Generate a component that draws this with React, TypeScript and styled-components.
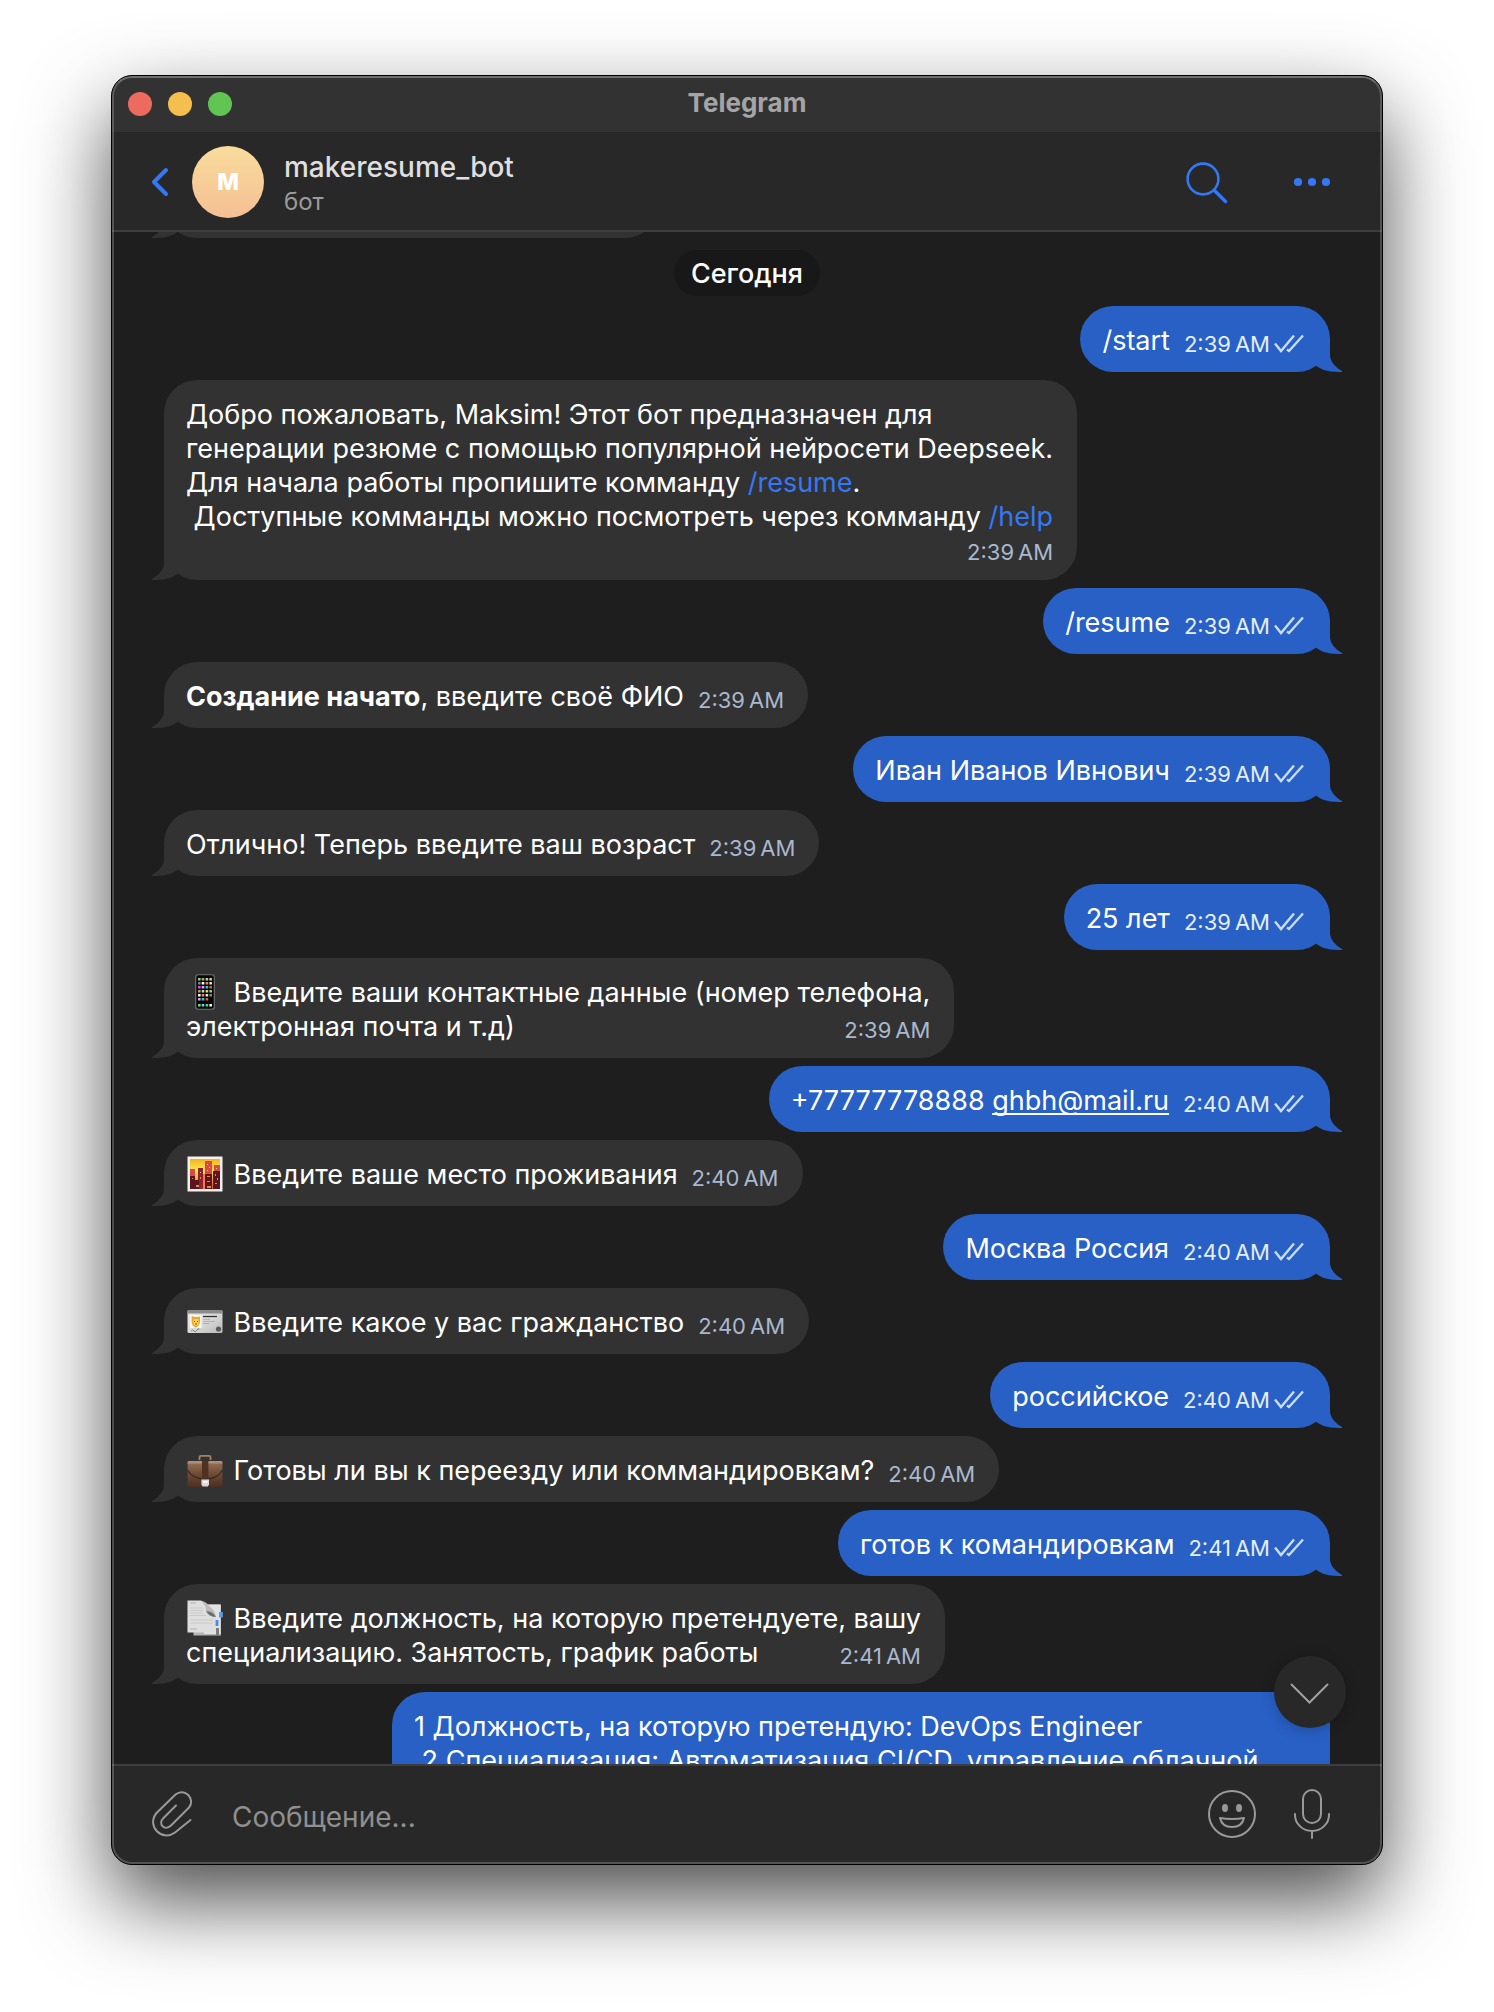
import React from 'react';
import styled, { createGlobalStyle, css } from 'styled-components';

const GlobalStyle = createGlobalStyle`
  * { box-sizing: border-box; }
  body {
    margin: 0;
    background: #ffffff;
    font-family: Inter, "Liberation Sans", sans-serif;
  }
`;

const Page = styled.div`
  display: flex;
  height: 100vh;
  padding: 75px 111px 147px;
`;

const Window = styled.main`
  position: relative;
  display: flex;
  flex: 1;
  flex-direction: column;
  min-width: 0;
  overflow: hidden;
  border: 1px solid #000000;
  border-radius: 21px;
  background: #1e1e1e;
  box-shadow: 0 36px 84px rgba(0, 0, 0, 0.7);

  &::after {
    content: '';
    position: absolute;
    inset: 0;
    border: 2px solid rgba(255, 255, 255, 0.2);
    border-top-color: rgba(255, 255, 255, 0.3);
    border-radius: 20px;
    pointer-events: none;
  }
`;

const TitleBar = styled.div`
  display: grid;
  grid-template-columns: 1fr auto 1fr;
  align-items: center;
  flex: none;
  height: 56px;
  padding: 0 16px;
  background: #323232;
`;

const WindowButtons = styled.div`
  display: flex;
  gap: 16px;
`;

const WindowButton = styled.button<{ $color: string }>`
  width: 24px;
  height: 24px;
  padding: 0;
  border: 0;
  border-radius: 50%;
  background: ${(p) => p.$color};
`;

const WindowTitle = styled.h1`
  margin: 0;
  padding-bottom: 2px;
  color: #a5a5a5;
  font-size: 26px;
  font-weight: 700;
  line-height: 32px;
`;

const Header = styled.header`
  display: flex;
  align-items: center;
  flex: none;
  height: 100px;
  padding: 2px 48px 0 36px;
  border-bottom: 2px solid #3d3d3d;
  background: #282828;
`;

const IconButton = styled.button`
  display: flex;
  align-items: center;
  justify-content: center;
  flex: none;
  padding: 0;
  border: 0;
  background: none;
`;

const Avatar = styled.div`
  display: flex;
  align-items: center;
  justify-content: center;
  flex: none;
  width: 72px;
  height: 72px;
  margin: 0 20px;
  border-radius: 50%;
  background: linear-gradient(#f9dc9c, #f5bf94);
  color: #ffffff;
  font-size: 23px;
  font-weight: 800;
`;

const Peer = styled.div`
  flex: 1;
  min-width: 0;
  padding-top: 3px;
`;

const PeerName = styled.h2`
  margin: 0;
  color: #dfdfdf;
  font-size: 28px;
  font-weight: 500;
  line-height: 36px;
`;

const PeerStatus = styled.p`
  margin: 0;
  color: #9a9a9a;
  font-size: 24px;
  line-height: 34px;
`;

const HeaderActions = styled.div`
  display: flex;
  align-items: center;
  gap: 62px;
`;

const Viewport = styled.section`
  position: relative;
  display: flex;
  flex: 1;
  flex-direction: column;
  min-height: 0;
  overflow: hidden;
`;

const Thread = styled.div`
  display: flex;
  flex-direction: column;
  flex: none;
  gap: 8px;
  margin-top: -60px;
  padding: 0 52px;
`;

const DateChip = styled.div`
  align-self: center;
  margin: 4px 0 2px;
  padding: 2px 17px 0;
  border-radius: 23px;
  background: #181818;
  color: #ffffff;
  font-size: 27px;
  font-weight: 500;
  line-height: 44px;
`;

type Side = 'in' | 'out';

const BubbleBox = styled.article<{ $side: Side; $form?: 'clipped' | 'long' }>`
  position: relative;
  align-self: ${(p) => (p.$side === 'in' ? 'flex-start' : 'flex-end')};
  min-height: 66px;
  padding: ${(p) => (p.$side === 'in' ? '18px 24px 14px 22px' : '18px 26px 14px 22px')};
  border-radius: 33px;
  background: ${(p) => (p.$side === 'in' ? '#323232' : '#2860c6')};
  color: #ffffff;
  font-size: 27px;
  line-height: 34px;
  white-space: pre;
  ${(p) => p.$form === 'clipped' && css`width: 494px;`}
  ${(p) => p.$form === 'long' && css`width: 938px; min-height: 200px;`}
`;

const TailSvg = styled.svg<{ $side: Side }>`
  position: absolute;
  bottom: 0;
  ${(p) => (p.$side === 'in' ? 'left: -12px; transform: scaleX(-1);' : 'right: -12px;')}
  fill: ${(p) => (p.$side === 'in' ? '#323232' : '#2860c6')};
`;

const Line = styled.div<{ $low?: boolean }>`
  display: flex;
  align-items: flex-end;
  justify-content: space-between;
  gap: 14px;
  height: ${(p) => (p.$low ? 32 : 34)}px;
`;

const Meta = styled.span<{ $side: Side }>`
  display: flex;
  align-items: center;
  gap: 4px;
  margin-left: auto;
  color: ${(p) => (p.$side === 'in' ? '#a9b8cf' : '#e4eefc')};
  font-size: 22px;
  line-height: 28px;
`;

const Command = styled.a`
  color: #3478f6;
  text-decoration: none;
`;

const Mail = styled.a`
  color: inherit;
  text-decoration: underline;
  text-decoration-thickness: 2px;
  text-underline-offset: 3px;
  text-decoration-skip-ink: none;
`;

const EmojiSvg = styled.svg`
  display: inline-block;
  width: 36px;
  height: 36px;
  margin: -2px 3px 0 1px;
  vertical-align: top;
`;

const ScrollDown = styled.button`
  position: absolute;
  right: 36px;
  bottom: 36px;
  display: flex;
  align-items: center;
  justify-content: center;
  width: 72px;
  height: 72px;
  padding: 4px 0 0;
  border: 0;
  border-radius: 50%;
  background: #282828;
  box-shadow: 0 2px 14px rgba(0, 0, 0, 0.22);
`;

const Composer = styled.footer`
  display: flex;
  align-items: center;
  flex: none;
  height: 100px;
  padding: 0 52px 2px 38px;
  border-top: 2px solid #3d3d3d;
  background: #282828;
`;

const MessageInput = styled.input`
  flex: 1;
  min-width: 0;
  margin: 0 38px;
  padding: 6px 0 0;
  border: 0;
  outline: 0;
  background: none;
  color: #ffffff;
  font-family: inherit;
  font-size: 28px;
  line-height: 34px;

  &::placeholder {
    color: #8f8f8f;
    opacity: 1;
  }
`;

const ComposerActions = styled.div`
  display: flex;
  align-items: center;
  gap: 38px;
`;

const Tail = ({ side }: { side: Side }) => (
  <TailSvg $side={side} width="40" height="34" viewBox="0 0 40 34" aria-hidden="true">
    <path d="M28 0V17C28 23 33 29 40 33V34C29 34 20 33 14 27.5L8 14L20 0Z" />
  </TailSvg>
);

const Checks = () => (
  <svg width="30" height="20" viewBox="0 0 30 20" fill="none" stroke="#c9dcf8" strokeWidth="2.4" aria-hidden="true">
    <path d="M1 9.5L7 17L20 1.5M13 15.5L15 17L29 1.5" />
  </svg>
);

const PhoneEmoji = () => {
  const colors = ['#7fe08a', '#d9a8f0', '#e8e8e8', '#c9a24a', '#49b9f2', '#888888', '#9adbe8', '#e05a4a', '#ffffff', '#f2d24a', '#d05ae8', '#f28a3a'];
  return (
    <EmojiSvg viewBox="0 0 36 36" aria-hidden="true">
      <rect x="8.7" y="0.7" width="18.6" height="34.6" rx="2.6" fill="#060606" stroke="#747474" strokeWidth="1.1" />
      {[4, 8, 12, 16, 20, 24, 30].map((y, r) =>
        [11, 14.7, 18.6, 22.4].map((x, c) =>
          r === 5 && c === 3 ? null : (
            <rect key={`${r}-${c}`} x={x} y={y} width="2.6" height="2.6" rx="0.5" fill={r === 6 ? ['#6fe070', '#6fd0f0', '#58d868', '#ffffff'][c] : colors[(r * 5 + c * 3) % 12]} />
          ),
        ),
      )}
    </EmojiSvg>
  );
};

const CityEmoji = () => (
  <EmojiSvg viewBox="0 0 36 36" aria-hidden="true">
    <defs>
      <linearGradient id="dusk" x1="0" y1="0" x2="0" y2="1">
        <stop offset="0" stopColor="#f3b41f" />
        <stop offset="0.4" stopColor="#ffe94f" />
        <stop offset="1" stopColor="#e8502c" />
      </linearGradient>
    </defs>
    <rect x="0.5" y="0.5" width="35" height="35" fill="#f4f1ee" />
    <rect x="3" y="3" width="30" height="30" fill="url(#dusk)" />
    <path d="M3 13h5v20H3zM18 5h7v28h-7zM27 9h6v24h-6z" fill="#d94a45" />
    <path d="M11 12h5v21h-5z" fill="#8e2230" />
    <path d="M3 20h5v4h4v9H3zM18 18h7v15h-7zM26 15h7v18h-7z" fill="#5e1420" />
    <path d="M16 18h2v15h-2z" fill="#f57845" />
    <path d="M20 8h1v1h-1zM22 11h1v1h-1zM29 12h1v1h-1zM20 14h1v1h-1zM13 16h1v1h-1z" fill="#ffc3a8" />
    <path d="M5 22h1v1H5zM9 29h3v2H9zM20 20h3v1h-3zM20 25h3v1h-3zM20 30h4v2h-4zM28 18h1v2h-1zM30 22h1v2h-1zM28 27h2v1h-2zM13 21h1v2h-1z" fill="#cf9440" />
  </EmojiSvg>
);

const CardEmoji = () => (
  <EmojiSvg viewBox="0 0 36 36" aria-hidden="true">
    <defs>
      <linearGradient id="card" x1="0" y1="0" x2="1" y2="1">
        <stop offset="0" stopColor="#e9e9e9" />
        <stop offset="0.5" stopColor="#dadada" />
        <stop offset="1" stopColor="#b8b8b8" />
      </linearGradient>
    </defs>
    <rect x="0.5" y="6" width="35" height="23" rx="1.6" fill="url(#card)" />
    <path d="M0.5 8V7.6Q0.5 6 2 6H34Q35.5 6 35.5 7.6V9.5H0.5Z" fill="#8b8b8b" />
    <rect x="3" y="11" width="11.5" height="13" fill="#f8f8f8" />
    <path d="M4.6 12.5Q6 12 7 13Q8.7 12.4 10.6 13Q12 12 13 12.8V18Q12 22.6 8.8 23.4Q5.2 22.6 4.6 18Z" fill="#e9a92e" />
    <path d="M6.2 15.6Q8.8 14 11.6 15.6V19Q10.8 21.6 8.8 21.8Q6.8 21.6 6.2 19Z" fill="#fbcf4c" />
    <path d="M7 17.5h1M10 17.5h1M8 20h2" stroke="#6d4b17" strokeWidth="0.8" />
    <path d="M16 12.5H30" stroke="#333333" strokeWidth="1.3" />
    <path d="M16 15.3H23M16 17.4H28M16 19.5H22" stroke="#a3a3a3" strokeWidth="0.8" />
    <path d="M4 27q2-2 3 0t3-1 2 0" fill="none" stroke="#727272" strokeWidth="0.8" />
    <circle cx="31.5" cy="25" r="2.6" fill="#5a5a5a" />
  </EmojiSvg>
);

const BriefcaseEmoji = () => (
  <EmojiSvg viewBox="0 0 36 36" aria-hidden="true">
    <defs>
      <linearGradient id="leather" x1="0" y1="0" x2="0" y2="1">
        <stop offset="0" stopColor="#9a755c" />
        <stop offset="0.5" stopColor="#6e4b37" />
        <stop offset="1" stopColor="#4a2f22" />
      </linearGradient>
    </defs>
    <path d="M12.5 8V5Q12.5 3.8 14 3.8H22Q23.5 3.8 23.5 5V8" fill="none" stroke="#a8815f" strokeWidth="1.8" />
    <rect x="0.6" y="9" width="34.8" height="26" rx="1.6" fill="url(#leather)" />
    <path d="M0.6 18Q5 27 18 27Q31 27 35.4 18" fill="none" stroke="#3c251a" strokeWidth="1.2" />
    <path d="M0.6 10.4Q0.6 9 2 9H34Q35.4 9 35.4 10.4V11.6H0.6Z" fill="#b08f76" />
    <path d="M15 9H21.4V27H15Z" fill="#50321f" />
    <path d="M14.4 27.5H22V32.5L20.8 34.4H15.6L14.4 32.5Z" fill="#d9d9d9" />
    <path d="M16 29H20.4V31H16Z" fill="#f8f8f8" />
  </EmojiSvg>
);

const DocsEmoji = () => (
  <EmojiSvg viewBox="0 0 36 36" aria-hidden="true">
    <path d="M6.5 4.5H34V35.5H6.5Z" fill="#b5b5b5" />
    <path d="M17 4.5H33.5V34H17Z" fill="#e2e2e2" />
    <path d="M32 12H35.8V17.5H32Z" fill="#5a9df0" />
    <path d="M0.5 0.5H13Q18 1 19 11Q20 15 29 17V32.5H0.5Z" fill="#dedede" />
    <path d="M13 0.5Q19 1 22 6Q28 10 29 17Q26 12 19 11Q19 3 13 0.5Z" fill="#bcbcbc" />
    <path d="M19 11Q26 11 29 17Q22 17 19 11Z" fill="#6f6f6f" />
    <path d="M3 8H15M3 10.5H16M3 13H16M3 15.5H19M3 20H26M3 23H26" stroke="#cacaca" strokeWidth="1" />
    <path d="M3 3H9M3 29H10" stroke="#aaaaaa" strokeWidth="0.9" />
    <path d="M28.6 20H31.4V26H28.6Z" fill="#3f8cf0" />
    <path d="M29 28H32V35H29Z" fill="#7d7d7d" />
  </EmojiSvg>
);

interface MessageProps {
  side: Side;
  time?: string;
  lines: React.ReactNode[];
  timeBelow?: boolean;
  form?: 'clipped' | 'long';
}

const Message = ({ side, time, lines, timeBelow, form }: MessageProps) => {
  const meta = time && (
    <Meta $side={side}>
      <time>{time.replace(' ', '\u202f')}</time>
      {side === 'out' && <Checks />}
    </Meta>
  );
  return (
    <BubbleBox $side={side} $form={form}>
      {lines.map((line, i) => (
        <Line key={i}>
          <span>{line}</span>
          {!timeBelow && i === lines.length - 1 && meta}
        </Line>
      ))}
      {timeBelow && <Line $low>{meta}</Line>}
      <Tail side={side} />
    </BubbleBox>
  );
};

const messages: MessageProps[] = [
  { side: 'out', time: '2:39 AM', lines: ['/start'] },
  {
    side: 'in',
    time: '2:39 AM',
    timeBelow: true,
    lines: [
      'Добро пожаловать, Maksim! Этот бот предназначен для',
      'генерации резюме с помощью популярной нейросети Deepseek.',
      <>Для начала работы пропишите комманду <Command href="#resume">/resume</Command>.</>,
      <> Доступные комманды можно посмотреть через комманду <Command href="#help">/help</Command></>,
    ],
  },
  { side: 'out', time: '2:39 AM', lines: ['/resume'] },
  { side: 'in', time: '2:39 AM', lines: [<><b>Создание начато</b>, введите своё ФИО</>] },
  { side: 'out', time: '2:39 AM', lines: ['Иван Иванов Ивнович'] },
  { side: 'in', time: '2:39 AM', lines: ['Отлично! Теперь введите ваш возраст'] },
  { side: 'out', time: '2:39 AM', lines: ['25 лет'] },
  {
    side: 'in',
    time: '2:39 AM',
    lines: [<><PhoneEmoji /> Введите ваши контактные данные (номер телефона,</>, 'электронная почта и т.д)'],
  },
  { side: 'out', time: '2:40 AM', lines: [<>+77777778888 <Mail href="mailto:ghbh@mail.ru">ghbh@mail.ru</Mail></>] },
  { side: 'in', time: '2:40 AM', lines: [<><CityEmoji /> Введите ваше место проживания</>] },
  { side: 'out', time: '2:40 AM', lines: ['Москва Россия'] },
  { side: 'in', time: '2:40 AM', lines: [<><CardEmoji /> Введите какое у вас гражданство</>] },
  { side: 'out', time: '2:40 AM', lines: ['российское'] },
  { side: 'in', time: '2:40 AM', lines: [<><BriefcaseEmoji /> Готовы ли вы к переезду или коммандировкам?</>] },
  { side: 'out', time: '2:41 AM', lines: ['готов к командировкам'] },
  {
    side: 'in',
    time: '2:41 AM',
    lines: [<><DocsEmoji /> Введите должность, на которую претендуете, вашу</>, 'специализацию. Занятость, график работы'],
  },
  {
    side: 'out',
    form: 'long',
    lines: [
      '1 Должность, на которую претендую: DevOps Engineer',
      ' 2 Специализация: Автоматизация CI/CD, управление облачной',
    ],
  },
];

export default function App() {
  return (
    <>
      <GlobalStyle />
      <Page>
        <Window>
          <TitleBar>
            <WindowButtons>
              <WindowButton type="button" aria-label="Закрыть" $color="#ed6a5e" />
              <WindowButton type="button" aria-label="Свернуть" $color="#f5bf4f" />
              <WindowButton type="button" aria-label="Развернуть" $color="#61c554" />
            </WindowButtons>
            <WindowTitle>Telegram</WindowTitle>
          </TitleBar>
          <Header>
            <IconButton type="button" aria-label="Назад">
              <svg width="24" height="36" viewBox="0 0 24 36" fill="none" stroke="#3478f6" strokeWidth="4" strokeLinecap="round" strokeLinejoin="round">
                <path d="M18 6L6 18L18 30" />
              </svg>
            </IconButton>
            <Avatar>M</Avatar>
            <Peer>
              <PeerName>makeresume_bot</PeerName>
              <PeerStatus>бот</PeerStatus>
            </Peer>
            <HeaderActions>
              <IconButton type="button" aria-label="Поиск">
                <svg width="44" height="44" viewBox="0 0 44 44" fill="none" stroke="#3478f6" strokeLinecap="round">
                  <circle cx="19" cy="19" r="15.4" strokeWidth="2.6" />
                  <path d="M30.5 30.5L41.5 41.5" strokeWidth="3.4" />
                </svg>
              </IconButton>
              <IconButton type="button" aria-label="Ещё">
                <svg width="44" height="12" viewBox="0 0 44 12" fill="#3478f6">
                  <circle cx="8" cy="6" r="4.1" />
                  <circle cx="22" cy="6" r="4.1" />
                  <circle cx="36" cy="6" r="4.1" />
                </svg>
              </IconButton>
            </HeaderActions>
          </Header>
          <Viewport>
            <Thread>
              <BubbleBox $side="in" $form="clipped">
                <Tail side="in" />
              </BubbleBox>
              <DateChip>Сегодня</DateChip>
              {messages.map((message, i) => (
                <Message key={i} {...message} />
              ))}
            </Thread>
            <ScrollDown type="button" aria-label="Вниз">
              <svg width="40" height="22" viewBox="0 0 40 22" fill="none" stroke="#a0a0a0" strokeWidth="2" strokeLinecap="round">
                <path d="M1.5 1.5L19.5 19.5L37.5 1.5" />
              </svg>
            </ScrollDown>
          </Viewport>
          <Composer>
            <IconButton type="button" aria-label="Прикрепить">
              <svg width="44" height="48" viewBox="0 0 44 48" fill="none" stroke="#999999" strokeWidth="2" strokeLinecap="round" strokeLinejoin="round">
                <path d="M26 15.5L13.5 28C7.5 34 14.5 41.5 21 35.5L39 17.5C46 9 34.5 -3 25.5 4.5L6.5 23C-4 36 12 52 25 42.5L40.5 30" />
              </svg>
            </IconButton>
            <MessageInput type="text" aria-label="Сообщение" placeholder="Сообщение..." />
            <ComposerActions>
              <IconButton type="button" aria-label="Эмодзи">
                <svg width="48" height="48" viewBox="0 0 48 48" fill="none" stroke="#999999" strokeWidth="2" strokeLinejoin="round">
                  <circle cx="24" cy="24" r="23" />
                  <ellipse cx="17" cy="18" rx="3" ry="4" fill="#999999" stroke="none" />
                  <ellipse cx="31" cy="18" rx="3" ry="4" fill="#999999" stroke="none" />
                  <path d="M12 28Q24 30 36 28Q34 37 24 37Q14 37 12 28Z" />
                </svg>
              </IconButton>
              <IconButton type="button" aria-label="Голосовое сообщение">
                <svg width="36" height="50" viewBox="0 0 36 50" fill="none" stroke="#999999" strokeWidth="2" strokeLinecap="round">
                  <rect x="9" y="1" width="18" height="33" rx="9" />
                  <path d="M1 25V26C1 35 9 42 18 42S35 35 35 26V25M18 42V49" />
                </svg>
              </IconButton>
            </ComposerActions>
          </Composer>
        </Window>
      </Page>
    </>
  );
}
